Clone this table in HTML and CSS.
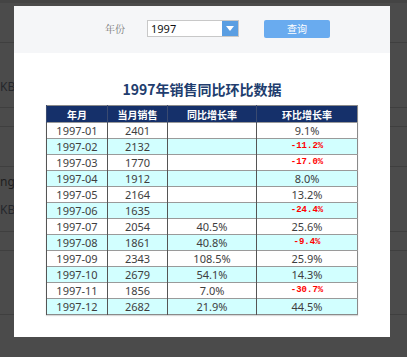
FILE: index.html
```html
<!DOCTYPE html>
<html lang="zh">
<head>
<meta charset="utf-8">
<title>1997年销售同比环比数据</title>
<link rel="stylesheet" href="styles.css">
</head>
<body>
<div class="page">
  <div class="strip"></div>
  <div class="row r1"></div>
  <div class="row r2"><span class="bgtext t-kb1">KB</span></div>
  <div class="row r3"></div>
  <div class="row r4"></div>
  <div class="row r5"><span class="bgtext t-ng">ng</span><span class="bgtext t-kb2">KB</span></div>
  <div class="row r6"></div>
  <div class="row r7"></div>
  <div class="row r8"></div>
</div>
<div class="modal">
  <div class="toolbar">
    <span class="label">年份</span>
    <div class="select">
      <span class="select-value">1997</span>
      <span class="select-btn"><svg width="8" height="5" viewBox="0 0 8 5"><path d="M0 0 L8 0 L4 5 Z" fill="#fff"/></svg></span>
    </div>
    <button class="query">查询</button>
  </div>
  <div class="content">
    <h1 class="title">1997年销售同比环比数据</h1>
    <table class="data">
      <colgroup><col class="c1"><col class="c2"><col class="c3"><col class="c4"></colgroup>
      <thead>
        <tr><th>年月</th><th>当月销售</th><th>同比增长率</th><th>环比增长率</th></tr>
      </thead>
      <tbody>
        <tr><td>1997-01</td><td>2401</td><td></td><td>9.1%</td></tr>
        <tr><td>1997-02</td><td>2132</td><td></td><td class="neg">-11.2%</td></tr>
        <tr><td>1997-03</td><td>1770</td><td></td><td class="neg">-17.0%</td></tr>
        <tr><td>1997-04</td><td>1912</td><td></td><td>8.0%</td></tr>
        <tr><td>1997-05</td><td>2164</td><td></td><td>13.2%</td></tr>
        <tr><td>1997-06</td><td>1635</td><td></td><td class="neg">-24.4%</td></tr>
        <tr><td>1997-07</td><td>2054</td><td>40.5%</td><td>25.6%</td></tr>
        <tr><td>1997-08</td><td>1861</td><td>40.8%</td><td class="neg">-9.4%</td></tr>
        <tr><td>1997-09</td><td>2343</td><td>108.5%</td><td>25.9%</td></tr>
        <tr><td>1997-10</td><td>2679</td><td>54.1%</td><td>14.3%</td></tr>
        <tr><td>1997-11</td><td>1856</td><td>7.0%</td><td class="neg">-30.7%</td></tr>
        <tr><td>1997-12</td><td>2682</td><td>21.9%</td><td>44.5%</td></tr>
      </tbody>
    </table>
  </div>
</div>
</body>
</html>
```
FILE: styles.css
```css
* { box-sizing: border-box; }
html, body { margin: 0; padding: 0; }
body {
  width: 407px;
  height: 357px;
  overflow: hidden;
  position: relative;
  background: #4b4b4b;
  font-family: "Noto Sans", "Noto Sans CJK SC", sans-serif;
}
.page { display: flex; flex-direction: column; }
.strip { height: 3px; background: #444; }
.row { border-bottom: 1px solid #3f3f3f; position: relative; }
.r1 { height: 40px; }
.r2 { height: 65px; }
.r3 { height: 19px; }
.r4 { height: 40px; }
.r5 { height: 65px; }
.r6 { height: 19px; }
.r7 { height: 64px; }
.r8 { height: 42px; border-bottom: 0; }
.bgtext { position: absolute; left: 0; font-size: 12px; color: #25272c; line-height: 14px; }
.t-kb1 { top: 37px; }
.t-ng { top: 8px; color: #1e1e1e; }
.t-kb2 { top: 36px; }

.modal {
  position: absolute;
  left: 14px;
  top: 6px;
  width: 376px;
  height: 331px;
  background: #fff;
  display: flex;
  flex-direction: column;
}
.toolbar {
  height: 47px;
  background: #f5f6f8;
  display: flex;
  align-items: center;
  padding-left: 91px;
  padding-bottom: 2px;
}
.label {
  font-family: "Noto Serif CJK SC", "Noto Sans CJK SC", serif;
  font-size: 10px;
  color: #777;
  width: 42px;
}
.select {
  width: 92px;
  height: 17px;
  border: 1px solid #c8c8c8;
  background: #fff;
  display: flex;
  align-items: stretch;
}
.select-value {
  flex: 1;
  font-size: 11px;
  line-height: 15px;
  padding-left: 3px;
  color: #111;
}
.select-btn {
  width: 16px;
  background: #5a9ee2;
  display: flex;
  align-items: center;
  justify-content: center;
}
.query {
  margin-left: 25px;
  width: 66px;
  height: 18px;
  border: 0;
  border-radius: 2px;
  background: #69abef;
  color: #fff;
  font-family: "Noto Sans CJK SC", sans-serif;
  font-size: 10px;
  padding: 0;
}
.content {
  display: flex;
  flex-direction: column;
  align-items: center;
  padding-top: 27px;
}
.title {
  margin: 0 0 7px 0;
  font-size: 14px;
  line-height: 18px;
  font-weight: bold;
  color: #213d6e;
  font-family: "Noto Sans CJK SC", sans-serif;
}
.data {
  border-collapse: collapse;
  width: 311px;
  table-layout: fixed;
  border: 1px solid #8a8a8a;
  box-shadow: 0 1px 1px rgba(0,0,0,0.15);
}
.c1 { width: 61px; }
.c2 { width: 60px; }
.c3 { width: 89px; }
.c4 { width: 101px; }
.data th {
  background: #15306a;
  color: #fff;
  font-size: 10px;
  font-weight: bold;
  height: 17px;
  padding: 0;
  line-height: 15px;
  border-left: 1px solid #3a4a70;
  font-family: "Noto Sans CJK SC", sans-serif;
}
.data td {
  height: 16px;
  padding: 0;
  text-align: center;
  font-size: 11px;
  line-height: 15px;
  color: #3e3e3e;
  border-left: 1px solid #555;
  border-top: 1px solid #9a9a9a;
}
.data tbody tr:nth-child(even) td { background: #d2ffff; }
.data td.neg {
  color: #ff0000;
  font-family: "Liberation Mono", monospace;
  font-weight: bold;
  font-size: 9px;
}
```
